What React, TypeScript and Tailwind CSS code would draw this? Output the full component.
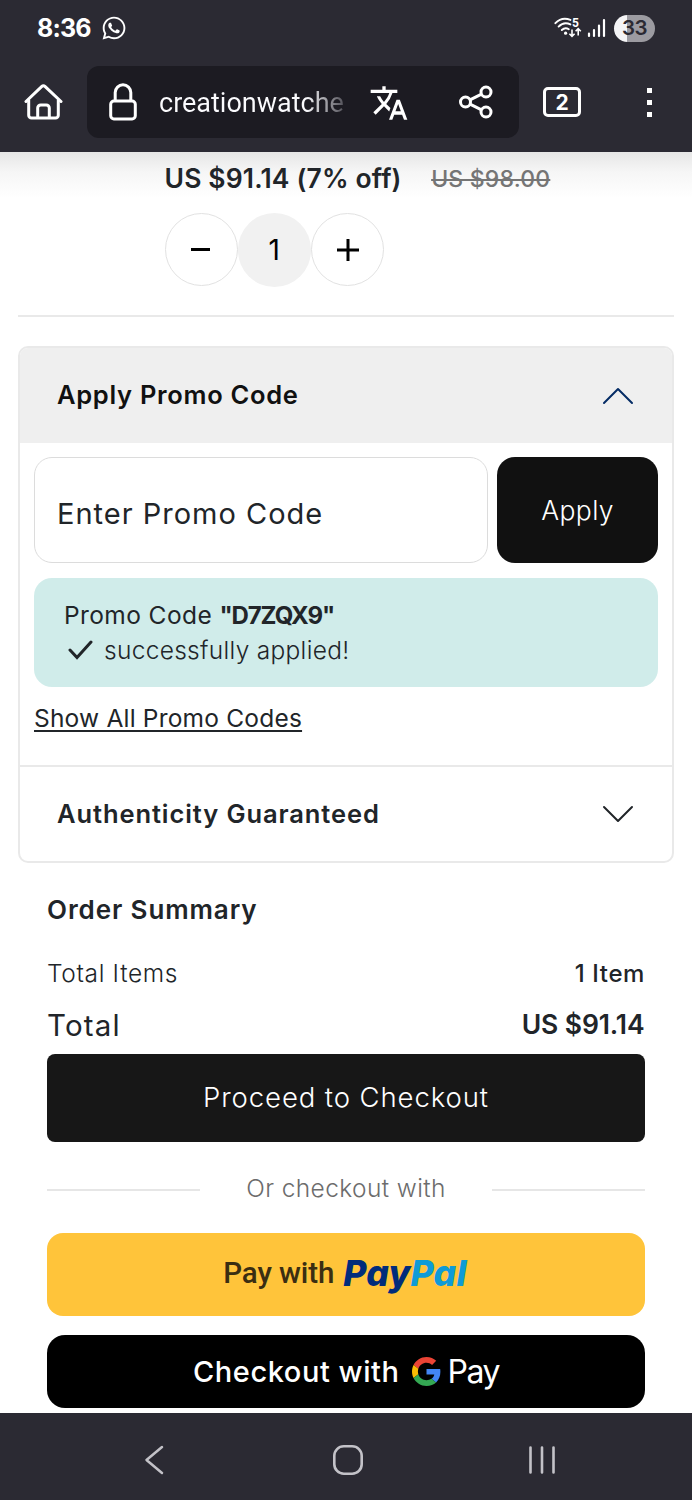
import { useState } from "react";
import { FaWhatsapp } from "react-icons/fa";
import { MdTranslate } from "react-icons/md";

function WifiIcon() {
  return (
    <svg width="28" height="22" viewBox="0 0 28 22" fill="none">
      <g stroke="#fff" strokeWidth="1.9" strokeLinecap="round">
        <path d="M1.4 6.2C5.2 2.2 11 .9 16.4 2.9" />
        <path d="M4.6 9.6c3.3-3.4 7.8-4.2 11.8-2.2" />
        <path d="M7.8 13c2.2-2.1 4.7-2.3 7-.8" />
      </g>
      <circle cx="11.6" cy="16.2" r="1.6" fill="#fff" />
      <path
        d="M18 12.5v6.7m-2.6-2.4 2.6 2.6 2.6-2.6M24.2 18.5v-6.7m-2.6 2.4 2.6-2.6 2.6 2.6"
        stroke="#fff"
        strokeWidth="1.6"
      />
      <text
        x="18"
        y="9.6"
        fill="#fff"
        fontSize="12"
        fontWeight="700"
        fontFamily="Roboto, sans-serif"
      >
        5
      </text>
    </svg>
  );
}

function GoogleIcon() {
  return (
    <svg className="ml-[12px] size-[29px]" viewBox="0 0 48 48">
      <path
        fill="#EA4335"
        d="M24 9.5c3.54 0 6.71 1.22 9.21 3.6l6.85-6.85C35.9 2.38 30.47 0 24 0 14.62 0 6.51 5.38 2.56 13.22l7.98 6.19C12.43 13.72 17.74 9.5 24 9.5z"
      />
      <path
        fill="#4285F4"
        d="M46.98 24.55c0-1.57-.15-3.09-.38-4.55H24v9.02h12.94c-.58 2.96-2.26 5.48-4.78 7.18l7.73 6c4.51-4.18 7.09-10.36 7.09-17.65z"
      />
      <path
        fill="#FBBC05"
        d="M10.53 28.59c-.48-1.45-.76-2.99-.76-4.59s.27-3.14.76-4.59l-7.98-6.19C.92 16.46 0 20.12 0 24c0 3.88.92 7.54 2.56 10.78l7.97-6.19z"
      />
      <path
        fill="#34A853"
        d="M24 48c6.48 0 11.93-2.13 15.89-5.81l-7.73-6c-2.15 1.45-4.92 2.3-8.16 2.3-6.26 0-11.57-4.22-13.47-9.91l-7.98 6.19C6.51 42.62 14.62 48 24 48z"
      />
    </svg>
  );
}

function StatusBar() {
  return (
    <div className="flex h-14 items-center justify-between pl-[37px] pr-[37px]">
      <div className="flex items-center gap-[10px]">
        <span className="text-[25px] font-bold leading-none tracking-[-0.8px]">
          8:36
        </span>
        <FaWhatsapp className="size-[26px]" />
      </div>
      <div className="flex items-center">
        <WifiIcon />
        <svg className="ml-[5px]" width="20" height="20" viewBox="0 0 20 20">
          <g stroke="#fff" strokeWidth="2.2" strokeLinecap="round">
            <path d="M2 15.5V18M7 12v6M12 7.5V18M17 2v16" />
          </g>
        </svg>
        <div className="ml-[7px] flex h-[27px] w-[41px] items-center justify-center rounded-full bg-[linear-gradient(90deg,#f4f4f6_32%,#9c9ba1_32%)]">
          <span className="text-[20.5px] font-semibold leading-none tracking-[-0.5px] text-[#2b2a33]">
            33
          </span>
        </div>
      </div>
    </div>
  );
}

function Toolbar() {
  return (
    <div className="flex h-24 items-center pb-1 pl-[24px]">
      <svg width="39" height="36" viewBox="0 0 39 36" fill="none">
        <g
          stroke="#fff"
          strokeWidth="3"
          strokeLinecap="round"
          strokeLinejoin="round"
        >
          <path d="M2 17.5 17.6 2.6a2.6 2.6 0 0 1 3.6 0L37 17.5" />
          <path d="M4.7 16v15.2a2.8 2.8 0 0 0 2.8 2.8h24a2.8 2.8 0 0 0 2.8-2.8V16" />
          <path d="M13.7 33.5V24a3 3 0 0 1 3-3h5.6a3 3 0 0 1 3 3v9.5" />
        </g>
      </svg>
      <div className="ml-6 flex h-[72px] w-[432px] items-center rounded-xl bg-[#1c1b22] pl-[22px]">
        <svg width="28" height="38" viewBox="0 0 28 38" fill="none">
          <g stroke="#fff" strokeWidth="3">
            <rect x="1.7" y="18" width="24.6" height="18" rx="3.2" />
            <path d="M6.2 18V9.6a7.8 7.8 0 0 1 15.6 0V18" />
          </g>
        </svg>
        <span className="ml-[22px] w-[188px] whitespace-nowrap bg-[linear-gradient(90deg,#fbfbfe_78%,#55545c_98%)] bg-clip-text pt-[2px] font-[Roboto,sans-serif] text-[27px] leading-[36px] text-transparent">
          creationwatche
        </span>
        <MdTranslate className="ml-[22px] mt-[2px] size-[40px]" />
        <svg
          className="ml-[49px]"
          width="36"
          height="36"
          viewBox="0 0 36 36"
          fill="none"
        >
          <g stroke="#fff" strokeWidth="3">
            <circle cx="7.5" cy="18" r="5" />
            <circle cx="28" cy="8" r="5" />
            <circle cx="28" cy="28" r="5" />
            <path d="m12 15.8 11.5-5.6M12 20.2l11.5 5.6" />
          </g>
        </svg>
      </div>
      <div className="ml-[24px] flex h-[30px] w-[38px] items-center justify-center rounded-[5px] border-3 border-white text-[21px] font-bold leading-none">
        2
      </div>
      <div className="ml-[66px] flex flex-col gap-[7px]">
        <span className="size-[5px] bg-white" />
        <span className="size-[5px] bg-white" />
        <span className="size-[5px] bg-white" />
      </div>
    </div>
  );
}

function CartItem() {
  const [quantity, setQuantity] = useState(1);

  return (
    <div className="mx-[18px] h-[165px] border-b-2 border-[#e9e9e9] pl-[146.5px]">
      <div className="flex h-[54px] items-center gap-[29.5px] whitespace-nowrap">
        <span className="text-[26.5px] font-semibold tracking-[0.15px]">
          US $91.14 (7% off)
        </span>
        <span className="text-[23px] font-medium tracking-[0.2px] text-[#757575] line-through decoration-2">
          US $98.00
        </span>
      </div>
      <div className="mt-[7px] flex text-black">
        <button
          className="flex size-[73px] items-center justify-center rounded-full border border-[#e2e2e2]"
          onClick={() => setQuantity(Math.max(1, quantity - 1))}
        >
          <span className="mr-px h-[3px] w-[19px] bg-black" />
        </button>
        <span className="flex size-[73.5px] items-center justify-center rounded-full bg-[#f1f1f1] text-[28px]">
          {quantity}
        </span>
        <button
          className="flex size-[73px] items-center justify-center rounded-full border border-[#e2e2e2]"
          onClick={() => setQuantity(quantity + 1)}
        >
          <svg width="22" height="22" viewBox="0 0 22 22">
            <path d="M11 0v22M0 11h22" stroke="#000" strokeWidth="3" />
          </svg>
        </button>
      </div>
    </div>
  );
}

function Chevron({ color, up }: { color: string; up?: boolean }) {
  return (
    <svg width="32" height="18" viewBox="0 0 32 18" fill="none">
      <path
        d={up ? "M2 16 16 2l14 14" : "M2 2l14 14L30 2"}
        stroke={color}
        strokeWidth="2"
        strokeLinecap="round"
        strokeLinejoin="round"
      />
    </svg>
  );
}

function Accordion() {
  return (
    <div className="mx-[18px] mt-[29px] h-[517px] overflow-hidden rounded-[10px] border-2 border-[#e9e9e9]">
      <div className="flex h-[95px] items-center justify-between bg-[#efefef] pl-[37px] pr-[38.5px]">
        <h2 className="text-[25.5px] font-semibold tracking-[0.7px] text-[#111]">
          Apply Promo Code
        </h2>
        <Chevron color="#052c65" up />
      </div>
      <div className="h-[324px] border-b-2 border-[#e9e9e9] px-[14px] pt-[14px]">
        <div className="flex gap-[9px]">
          <div className="flex h-[106px] w-[455px] items-center rounded-[18px] border border-[#dcdcdc] pl-[22px] pt-[8px] text-[29px] tracking-[1px]">
            Enter Promo Code
          </div>
          <button className="h-[106px] w-[161px] rounded-[18px] bg-[#111] pt-[2px] text-[26.5px] font-[350] tracking-[0.4px] text-white">
            Apply
          </button>
        </div>
        <div className="mt-[15px] flex h-[109px] flex-col justify-center rounded-[18px] bg-[#d0ecea] pb-px pl-[30px]">
          <p className="text-[24.5px] leading-[34px] tracking-[0.4px]">
            Promo Code{" "}
            <b className="text-[24px] font-bold tracking-[-1.1px]">
              "D7ZQX9"
            </b>
          </p>
          <p className="flex items-center text-[24.5px] font-light leading-[34px] tracking-[0.3px]">
            <svg
              className="ml-[4px] mr-[11px]"
              width="25"
              height="20"
              viewBox="0 0 25 20"
              fill="none"
            >
              <path
                d="m2 10 7 7.5L23 2"
                stroke="#212529"
                strokeWidth="3"
                strokeLinecap="round"
              />
            </svg>
            successfully applied!
          </p>
        </div>
        <a
          href="#codes"
          className="mt-[13px] inline-block text-[24.5px] leading-[36px] tracking-[0.2px] underline decoration-[1.5px] underline-offset-[3px]"
        >
          Show All Promo Codes
        </a>
      </div>
      <div className="flex h-[94px] items-center justify-between pl-[37px] pr-[38.5px]">
        <h2 className="text-[25.5px] font-semibold tracking-[0.9px]">
          Authenticity Guaranteed
        </h2>
        <Chevron color="#212529" />
      </div>
    </div>
  );
}

function OrderSummary() {
  return (
    <div className="px-[47px]">
      <h2 className="mt-[27px] text-[26px] font-semibold leading-[40px] tracking-[0.9px]">
        Order Summary
      </h2>
      <div className="mt-[26px] flex h-[36px] items-center justify-between text-[24px]">
        <span className="pb-[2px] text-[24.5px] font-[350] tracking-[0.65px]">
          Total Items
        </span>
        <span className="font-medium tracking-[0.6px]">1 Item</span>
      </div>
      <div className="mt-[13px] flex h-[40px] items-center justify-between">
        <span className="text-[29.5px] tracking-[1.2px]">Total</span>
        <span className="pr-[0.5px] text-[26.5px] font-semibold tracking-[-0.1px]">
          US $91.14
        </span>
      </div>
      <button className="mt-[9px] h-[88px] w-full rounded-lg bg-[#171717] text-[27.5px] font-[350] tracking-[0.9px] text-white">
        Proceed to Checkout
      </button>
      <div className="mt-[27px] flex h-[40px] items-center justify-between">
        <span className="mt-[2px] h-[2px] w-[153px] bg-[#e6e6e6]" />
        <span className="pb-[2px] text-[24.5px] font-[350] tracking-[0.4px] text-[#6c6c6c]">
          Or checkout with
        </span>
        <span className="mt-[2px] h-[2px] w-[153px] bg-[#e6e6e6]" />
      </div>
      <button className="mt-[24px] flex h-[83px] w-full items-center justify-center rounded-[16px] bg-[#ffc43a] pb-[2px] pr-[2px] font-[Roboto,sans-serif] text-[29.5px] text-[#3a2e12]">
        <span className="font-medium tracking-[-0.1px]">Pay with</span>
        <span className="ml-[9px] font-[Inter,sans-serif] text-[35.5px] font-extrabold italic tracking-[0.2px] text-[#012c7b]">
          Pay<span className="text-[#0f9bd7]">Pal</span>
        </span>
      </button>
      <button className="mt-[19px] flex h-[73px] w-full items-center justify-center rounded-[18px] bg-black text-[29px] text-white">
        <span className="pt-px font-[450] tracking-[0.55px]">
          Checkout with
        </span>
        <GoogleIcon />
        <span className="ml-[7px] text-[32px] tracking-[-1.5px]">Pay</span>
      </button>
    </div>
  );
}

function NavigationBar() {
  return (
    <div className="flex h-[87px] items-center bg-[#2b2a33] pt-[6px]">
      <svg
        className="ml-[144px]"
        width="20"
        height="30"
        viewBox="0 0 20 30"
        fill="none"
      >
        <path
          d="M18 2 2.5 15 18 28"
          stroke="#c3c2c8"
          strokeWidth="2.5"
          strokeLinecap="round"
          strokeLinejoin="round"
        />
      </svg>
      <svg
        className="ml-[169px]"
        width="30"
        height="30"
        viewBox="0 0 30 30"
        fill="none"
      >
        <rect
          x="1.3"
          y="1.3"
          width="27.4"
          height="27.4"
          rx="9.5"
          stroke="#c3c2c8"
          strokeWidth="2.6"
        />
      </svg>
      <svg
        className="ml-[166px]"
        width="27"
        height="28"
        viewBox="0 0 27 28"
        fill="none"
      >
        <path
          d="M1.5 1.5v25M13 1.5v25M24.5 1.5v25"
          stroke="#c3c2c8"
          strokeWidth="2.6"
          strokeLinecap="round"
        />
      </svg>
    </div>
  );
}

export default function App() {
  return (
    <div className="flex h-[1500px] w-[692px] flex-col overflow-hidden bg-white font-[Inter,sans-serif] text-[#212529]">
      <header className="h-[152px] shrink-0 bg-[#2b2a33] text-white">
        <StatusBar />
        <Toolbar />
      </header>
      <main className="h-[1261px] shrink-0 overflow-hidden bg-[linear-gradient(180deg,#e6e6e6_0px,#f6f6f6_20px,#ffffff_46px)]">
        <CartItem />
        <Accordion />
        <OrderSummary />
      </main>
      <NavigationBar />
    </div>
  );
}
